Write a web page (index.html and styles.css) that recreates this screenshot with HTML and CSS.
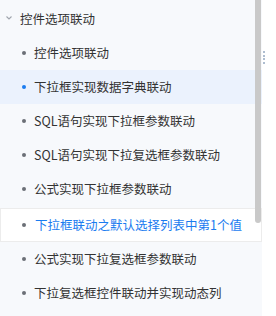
FILE: index.html
```html
<!DOCTYPE html>
<html lang="zh-CN">
<head>
    <meta charset="UTF-8">
    <meta name="viewport" content="width=device-width, initial-scale=1.0">
    <title>控件选项联动</title>
    <link rel="stylesheet" href="styles.css">
</head>
<body>
    <div class="layout">
        <div class="sidebar">
            <div class="group-title">
                <svg class="arrow" width="8" height="6" viewBox="0 0 8 6"><path d="M1.5 1.5 L4 4 L6.5 1.5" fill="none" stroke="#a0a5ad" stroke-width="1.1"/></svg>
                <span>控件选项联动</span>
            </div>
            <ul class="menu">
                <li class="item">控件选项联动</li>
                <li class="item active">下拉框实现数据字典联动</li>
                <li class="item">SQL语句实现下拉框参数联动</li>
                <li class="item">SQL语句实现下拉复选框参数联动</li>
                <li class="item">公式实现下拉框参数联动</li>
                <li class="item hover">下拉框联动之默认选择列表中第1个值</li>
                <li class="item">公式实现下拉复选框参数联动</li>
                <li class="item">下拉复选框控件联动并实现动态列</li>
            </ul>
            <div class="thumb"></div>
        </div>
        <div class="resizer">
            <i></i><i></i><i></i><i></i>
        </div>
    </div>
</body>
</html>
```

FILE: styles.css
```css
body {
    margin: 0;
    background-color: #fff;
    font-family: 'Noto Sans CJK SC', 'Noto Sans', sans-serif;
    font-size: 12.5px;
    color: #333;
}
.layout {
    display: flex;
    height: 316px;
}
.sidebar {
    position: relative;
    width: 262px;
    height: 316px;
    overflow: hidden;
    background-color: #f7f9fc;
}
.group-title {
    display: flex;
    align-items: center;
    height: 36px;
    padding-left: 5px;
    gap: 7px;
}
.menu {
    list-style: none;
    margin: 0;
    padding: 0;
}
.item {
    position: relative;
    height: 34px;
    line-height: 34px;
    padding-left: 34px;
    white-space: nowrap;
    box-sizing: border-box;
}
.item::before {
    content: '';
    position: absolute;
    left: 22px;
    top: 15px;
    width: 4px;
    height: 4px;
    border-radius: 50%;
    background-color: #6b6f76;
}
.item.active {
    background-color: #ebf2fd;
}
.item.active::before {
    background-color: #1a7cf0;
}
.item.hover {
    margin-top: 2px;
    line-height: 32px;
    background-color: #fff;
    border: 1px solid #ececec;
    color: #1a7cf0;
}
.item.hover::before {
    top: 14px;
    left: 21px;
}
.thumb {
    position: absolute;
    left: 255px;
    top: 0;
    width: 6px;
    height: 223px;
    background-color: #c9c9c9;
    border-radius: 0 0 3px 3px;
}
.resizer {
    display: flex;
    flex-direction: column;
    gap: 1.7px;
    padding: 51px 0 0 1px;
}
.resizer i {
    display: block;
    width: 2px;
    height: 2px;
    background-color: #aebdd0;
}
```
